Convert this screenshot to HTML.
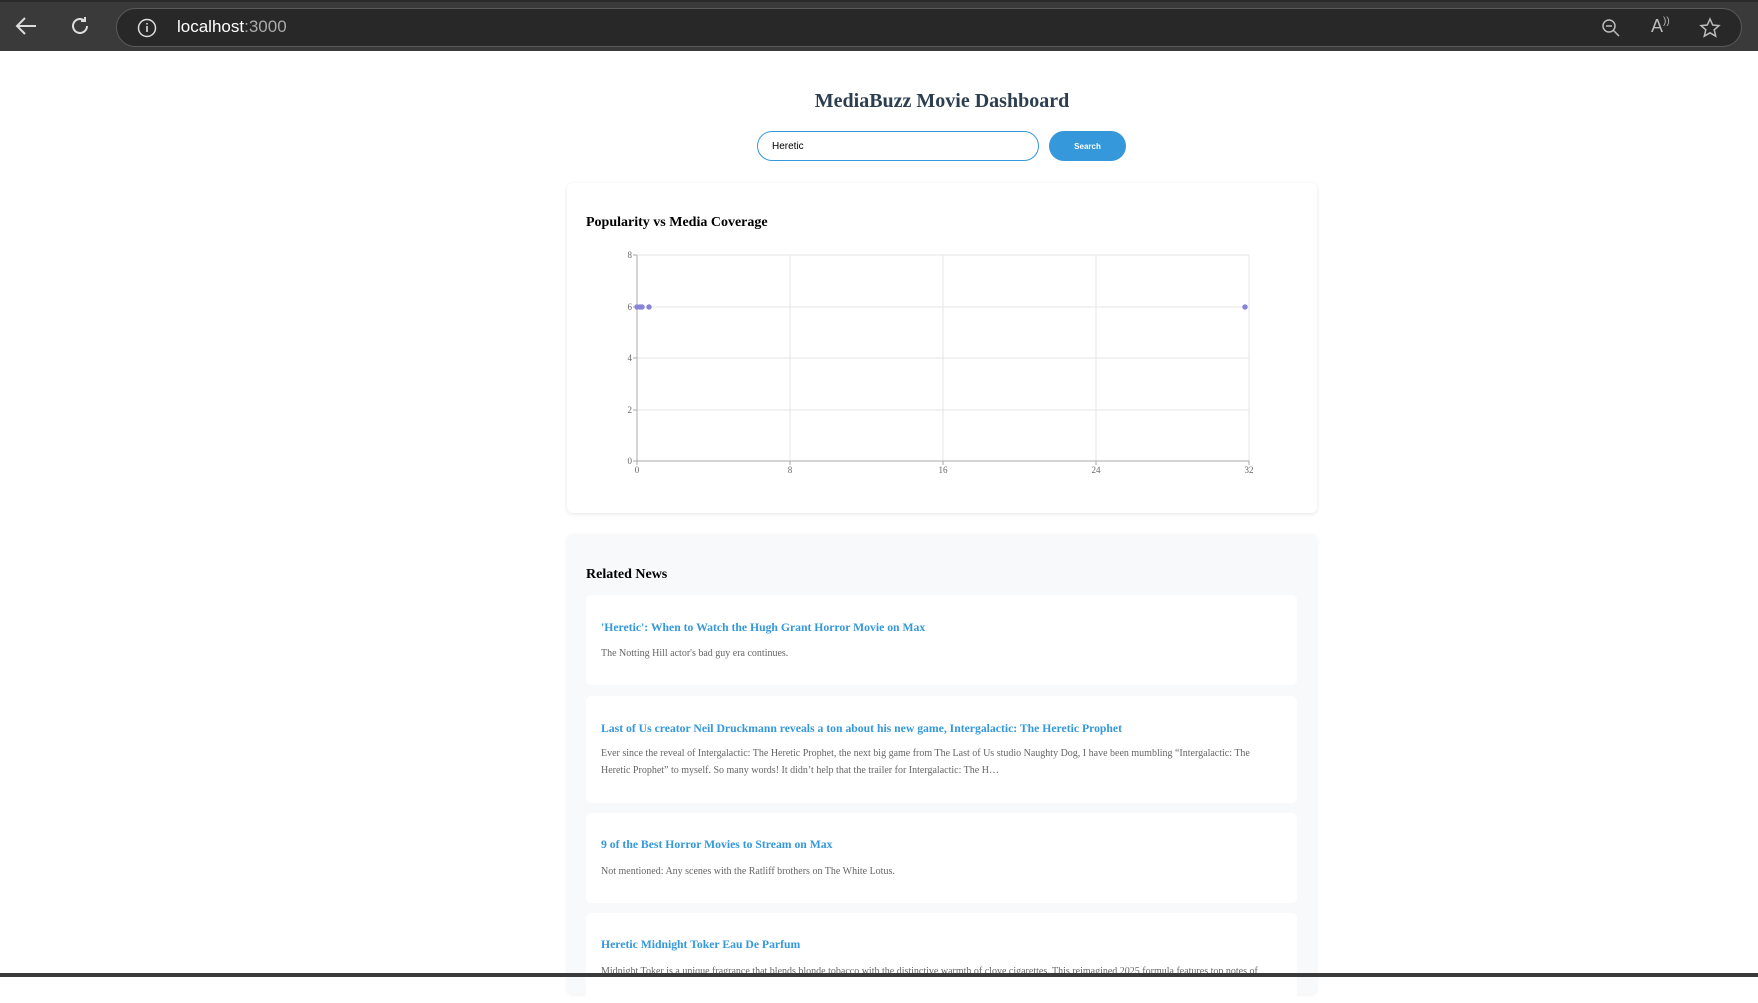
<!DOCTYPE html>
<html><head><meta charset="utf-8"><style>
*{box-sizing:border-box;margin:0;padding:0}
html,body{width:1758px;height:977px;overflow:hidden;background:#fff;font-family:"Liberation Serif",serif}
.chrome{position:absolute;left:0;top:0;width:1758px;height:51px;background:#3a3a3a;border-top:2px solid #2a2a2a}
.url{position:absolute;left:116px;top:6px;width:1626px;height:39px;border:1px solid #5a5a5a;border-radius:20px;background:#282828}
.url .t{position:absolute;left:60px;top:8px;font-family:"Liberation Sans",sans-serif;font-size:17px;color:#fff}
.url .t span{color:#aaa}
.abs{position:absolute}
h1{position:absolute;left:567px;width:750px;top:90px;text-align:center;font-size:20px;color:#2c3e50;font-weight:bold}
.input{position:absolute;left:757px;top:131px;width:282px;height:30px;border:1.5px solid #3498db;border-radius:15px;font-family:"Liberation Sans",sans-serif;font-size:10px;padding:9px 14px;color:#000}
.btn{position:absolute;left:1049px;top:131px;width:77px;height:30px;border-radius:15px;background:#3498db;color:#fff;font-family:"Liberation Sans",sans-serif;font-size:8px;font-weight:bold;text-align:center;line-height:31px}
.card{position:absolute;left:567px;top:183px;width:750px;height:330px;background:#fff;border-radius:6px;box-shadow:0 1px 4px rgba(0,0,0,.1)}
.news{position:absolute;left:567px;top:534px;width:750px;height:460px;background:#f8f9fa;border-radius:6px;box-shadow:0 1px 4px rgba(0,0,0,.06)}
h2{position:absolute;font-size:14px;font-weight:bold;color:#000}
.item{position:absolute;left:19px;width:711px;background:#fff;border-radius:5px}
.item a{position:absolute;left:15px;font-size:11.7px;color:#3498db;font-weight:bold;text-decoration:none;white-space:nowrap}
.item p{position:absolute;left:15px;right:30px;font-size:10px;line-height:17px;color:#666}
</style></head><body>
<div class="chrome">
<svg class="abs" style="left:12px;top:12px" width="28" height="24" viewBox="0 0 28 24"><path d="M24 12H5M13 4l-8 8 8 8" stroke="#ddd" stroke-width="2" fill="none"/></svg>
<svg class="abs" style="left:68px;top:12px" width="24" height="24" viewBox="0 0 24 24"><path d="M19 12a7 7 0 1 1-2.5-5.4M17 3v4h-4" stroke="#ddd" stroke-width="2" fill="none"/></svg>
<div class="url">
<svg class="abs" style="left:20px;top:9px" width="20" height="20" viewBox="0 0 20 20"><circle cx="10" cy="10" r="8.5" stroke="#ddd" stroke-width="1.5" fill="none"/><path d="M10 8v6M10 5v1.5" stroke="#ddd" stroke-width="1.6"/></svg>
<div class="t">localhost<span>:3000</span></div>
<svg class="abs" style="left:1484px;top:9px" width="20" height="20" viewBox="0 0 20 20"><circle cx="8" cy="8" r="6" stroke="#bbb" stroke-width="1.5" fill="none"/><path d="M12.5 12.5L18 18M5 8h6" stroke="#bbb" stroke-width="1.5"/></svg>
<div class="abs" style="left:1534px;top:7px;color:#bbb;font-family:'Liberation Sans';font-size:18px">A<span style="font-size:10px;vertical-align:top">))</span></div>
<svg class="abs" style="left:1582px;top:8px" width="22" height="22" viewBox="0 0 22 22"><path d="M11 2l2.7 6 6.3.6-4.8 4.2 1.5 6.4L11 15.8 5.3 19.2l1.5-6.4L2 8.6 8.3 8z" stroke="#bbb" stroke-width="1.5" fill="none"/></svg>
</div>
</div>
<h1>MediaBuzz Movie Dashboard</h1>
<div class="input">Heretic</div>
<div class="btn">Search</div>
<div class="card">
<h2 style="left:19px;top:32px">Popularity vs Media Coverage</h2>
<svg class="abs" style="left:0;top:0" width="750" height="330" viewBox="567 183 750 330" font-family="Liberation Serif" font-size="9" fill="#666">
<g stroke="#e5e5e5" stroke-width="1">
<line x1="637" y1="255" x2="1249" y2="255"/><line x1="637" y1="307" x2="1249" y2="307"/><line x1="637" y1="358" x2="1249" y2="358"/><line x1="637" y1="410" x2="1249" y2="410"/>
<line x1="790" y1="255" x2="790" y2="461"/><line x1="943" y1="255" x2="943" y2="461"/><line x1="1096" y1="255" x2="1096" y2="461"/><line x1="1249" y1="255" x2="1249" y2="461"/>
</g>
<g stroke="#aaa"><line x1="637" y1="255" x2="637" y2="461"/><line x1="637" y1="461" x2="1249" y2="461"/>
<line x1="633" y1="255" x2="637" y2="255"/><line x1="633" y1="307" x2="637" y2="307"/><line x1="633" y1="358" x2="637" y2="358"/><line x1="633" y1="410" x2="637" y2="410"/><line x1="633" y1="461" x2="637" y2="461"/>
<line x1="637" y1="461" x2="637" y2="465"/><line x1="790" y1="461" x2="790" y2="465"/><line x1="943" y1="461" x2="943" y2="465"/><line x1="1096" y1="461" x2="1096" y2="465"/><line x1="1249" y1="461" x2="1249" y2="465"/></g>
<g text-anchor="end"><text x="632" y="258">8</text><text x="632" y="310">6</text><text x="632" y="361">4</text><text x="632" y="413">2</text><text x="632" y="464">0</text></g>
<g text-anchor="middle"><text x="637" y="473">0</text><text x="790" y="473">8</text><text x="943" y="473">16</text><text x="1096" y="473">24</text><text x="1249" y="473">32</text></g>
<g fill="#8884d8"><circle cx="637" cy="307" r="2.7"/><circle cx="640" cy="307" r="2.7"/><circle cx="642" cy="307" r="2.7"/><circle cx="649" cy="307" r="2.7"/><circle cx="1245" cy="307" r="2.7"/></g>
</svg>
</div>
<div class="news">
<h2 style="left:19px;top:33px">Related News</h2>
<div class="item" style="top:61px;height:90px"><a style="top:26px">'Heretic': When to Watch the Hugh Grant Horror Movie on Max</a><p style="top:50px">The Notting Hill actor's bad guy era continues.</p></div>
<div class="item" style="top:162px;height:107px"><a style="top:26px">Last of Us creator Neil Druckmann reveals a ton about his new game, Intergalactic: The Heretic Prophet</a><p style="top:49px">Ever since the reveal of Intergalactic: The Heretic Prophet, the next big game from The Last of Us studio Naughty Dog, I have been mumbling “Intergalactic: The Heretic Prophet” to myself. So many words! It didn’t help that the trailer for Intergalactic: The H…</p></div>
<div class="item" style="top:279px;height:90px"><a style="top:25px">9 of the Best Horror Movies to Stream on Max</a><p style="top:50px">Not mentioned: Any scenes with the Ratliff brothers on The White Lotus.</p></div>
<div class="item" style="top:379px;height:90px"><a style="top:25px">Heretic Midnight Toker Eau De Parfum</a><p style="top:50px;white-space:nowrap;overflow:hidden">Midnight Toker is a unique fragrance that blends blonde tobacco with the distinctive warmth of clove cigarettes. This reimagined 2025 formula features top notes of</p></div>
</div>
<div class="abs" style="left:0;top:973px;width:1758px;height:4px;background:#3a3a3a"></div>
</body></html>
